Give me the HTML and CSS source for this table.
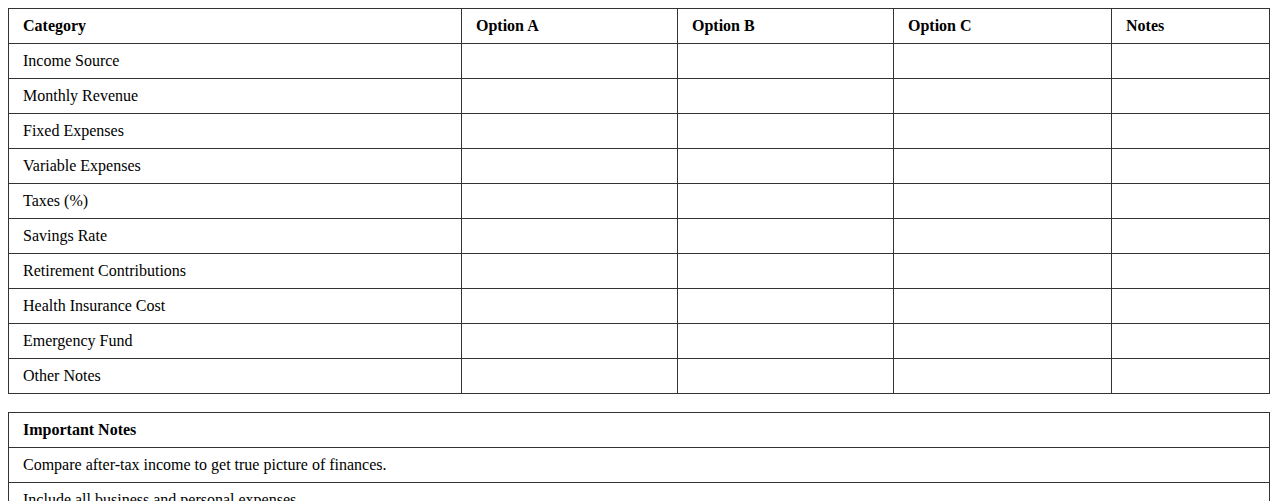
FILE: index.html
```html
<!DOCTYPE html>
<html>
<head>
<meta charset="utf-8">
<link rel="stylesheet" href="styles.css">
</head>
<body>
<table class="grid">
  <colgroup>
    <col class="c-cat"><col class="c-opt"><col class="c-opt"><col class="c-optc"><col>
  </colgroup>
  <thead>
    <tr><th>Category</th><th>Option A</th><th>Option B</th><th>Option C</th><th>Notes</th></tr>
  </thead>
  <tbody>
    <tr><td>Income Source</td><td></td><td></td><td></td><td></td></tr>
    <tr><td>Monthly Revenue</td><td></td><td></td><td></td><td></td></tr>
    <tr><td>Fixed Expenses</td><td></td><td></td><td></td><td></td></tr>
    <tr><td>Variable Expenses</td><td></td><td></td><td></td><td></td></tr>
    <tr><td>Taxes (%)</td><td></td><td></td><td></td><td></td></tr>
    <tr><td>Savings Rate</td><td></td><td></td><td></td><td></td></tr>
    <tr><td>Retirement Contributions</td><td></td><td></td><td></td><td></td></tr>
    <tr><td>Health Insurance Cost</td><td></td><td></td><td></td><td></td></tr>
    <tr><td>Emergency Fund</td><td></td><td></td><td></td><td></td></tr>
    <tr><td>Other Notes</td><td></td><td></td><td></td><td></td></tr>
  </tbody>
</table>
<table class="grid notes">
  <thead>
    <tr><th>Important Notes</th></tr>
  </thead>
  <tbody>
    <tr><td>Compare after-tax income to get true picture of finances.</td></tr>
    <tr><td>Include all business and personal expenses.</td></tr>
  </tbody>
</table>
</body>
</html>
```
FILE: styles.css
```css
body {
  margin: 8px;
  font-family: "Liberation Serif", "Times New Roman", serif;
  font-size: 16px;
  color: #000;
  background: #fff;
}
.grid {
  width: 100%;
  border-collapse: collapse;
  table-layout: fixed;
  margin-bottom: 18px;
}
.grid th,
.grid td {
  border: 1px solid #333;
  height: 34px;
  padding: 0 14px;
  text-align: left;
  vertical-align: middle;
}
.grid th {
  font-weight: bold;
}
.c-cat { width: 453px; }
.c-opt { width: 216px; }
.c-optc { width: 218px; }
```
